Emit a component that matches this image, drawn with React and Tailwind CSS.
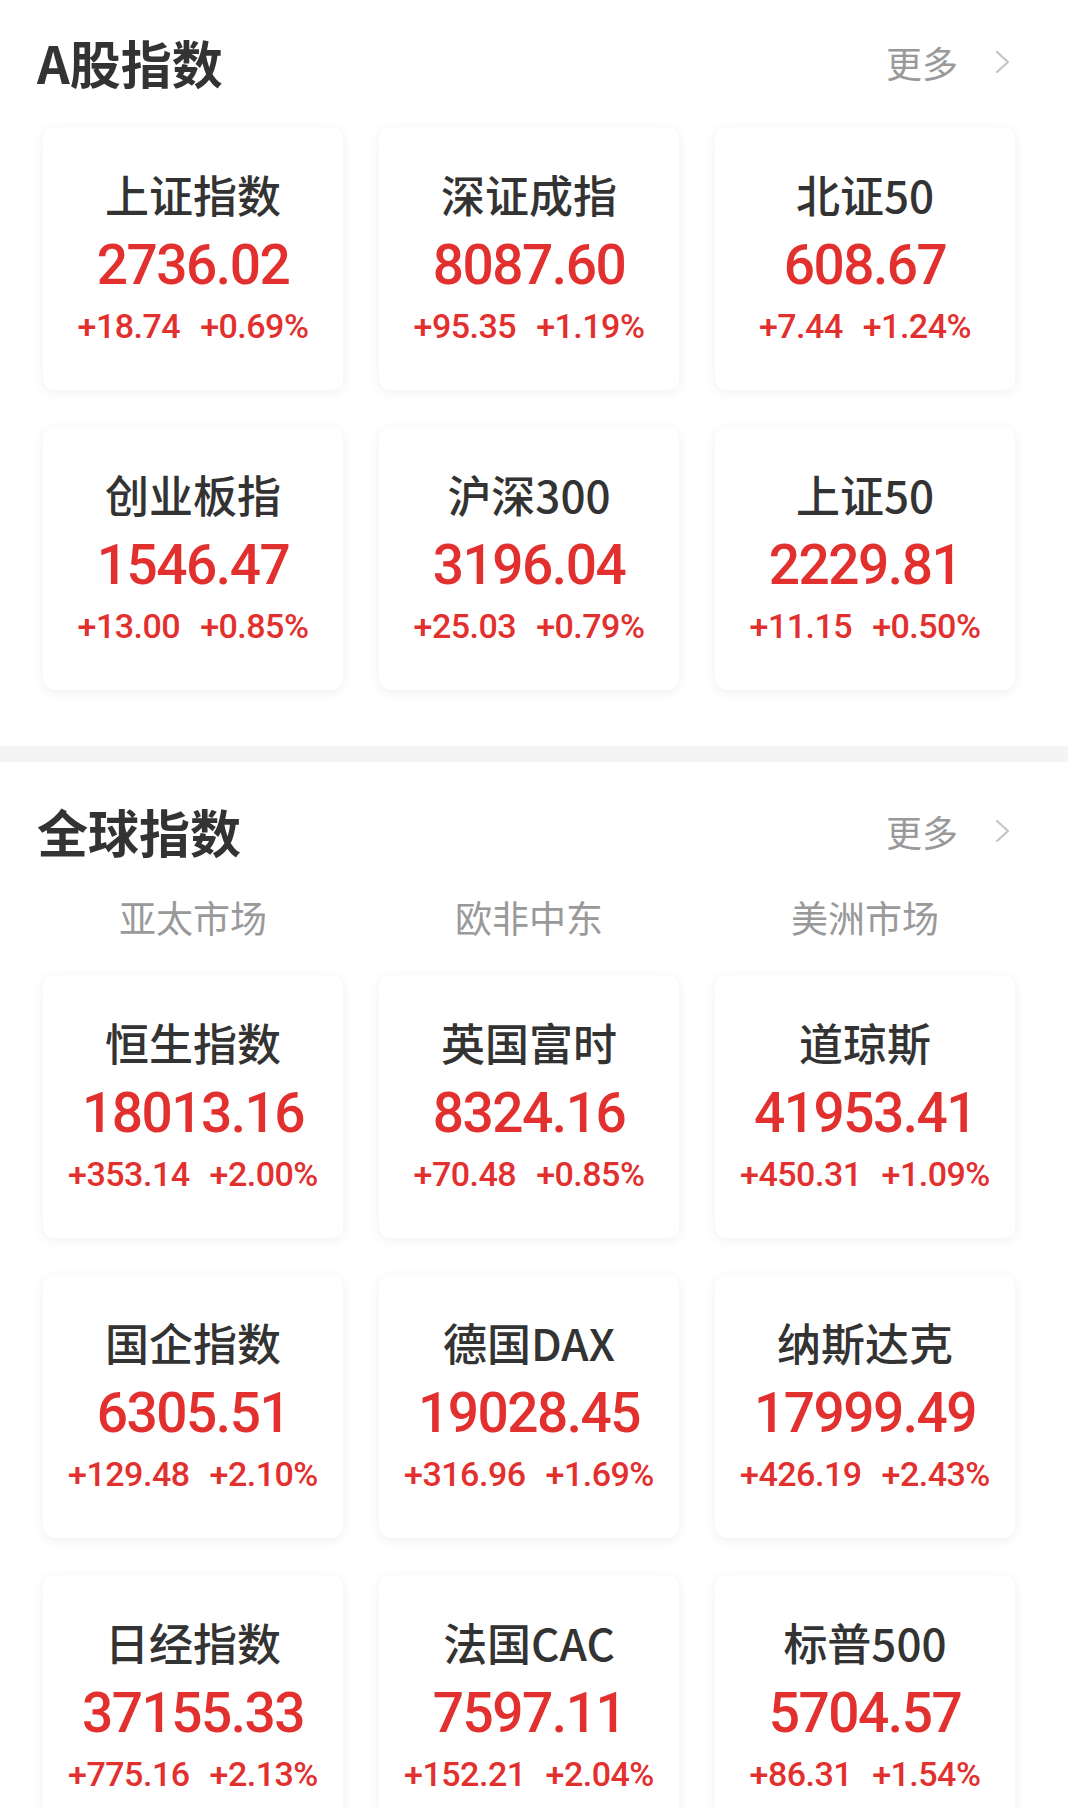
import React from 'react';

const cjk = { fontFamily: '"Noto Sans CJK SC", "Noto Sans", sans-serif' };
const num = { fontFamily: 'Roboto, "Noto Sans", sans-serif' };

const aShares = [
	{ name: '上证指数', price: '2736.02', change: '+18.74', pct: '+0.69%' },
	{ name: '深证成指', price: '8087.60', change: '+95.35', pct: '+1.19%' },
	{ name: '北证50', price: '608.67', change: '+7.44', pct: '+1.24%' },
	{ name: '创业板指', price: '1546.47', change: '+13.00', pct: '+0.85%' },
	{ name: '沪深300', price: '3196.04', change: '+25.03', pct: '+0.79%' },
	{ name: '上证50', price: '2229.81', change: '+11.15', pct: '+0.50%' },
];

const globalIdx = [
	{ name: '恒生指数', price: '18013.16', change: '+353.14', pct: '+2.00%' },
	{ name: '英国富时', price: '8324.16', change: '+70.48', pct: '+0.85%' },
	{ name: '道琼斯', price: '41953.41', change: '+450.31', pct: '+1.09%' },
	{ name: '国企指数', price: '6305.51', change: '+129.48', pct: '+2.10%' },
	{ name: '德国DAX', price: '19028.45', change: '+316.96', pct: '+1.69%' },
	{ name: '纳斯达克', price: '17999.49', change: '+426.19', pct: '+2.43%' },
	{ name: '日经指数', price: '37155.33', change: '+775.16', pct: '+2.13%' },
	{ name: '法国CAC', price: '7597.11', change: '+152.21', pct: '+2.04%' },
	{ name: '标普500', price: '5704.57', change: '+86.31', pct: '+1.54%' },
];

function Header({ title }) {
	return (
		<div className="flex items-center justify-between h-[50px] pl-[37px] pr-[58px]">
			<h2 className="text-[51px] font-bold leading-[50px] text-[#333]" style={cjk}>
				{title}
			</h2>
			<div className="flex items-center gap-[37px]">
				<span className="text-[36px] leading-[40px] text-[#999]" style={cjk}>
					更多
				</span>
				<svg width="15" height="24" viewBox="0 0 15 24" fill="none">
					<path d="M2 2 L13 12 L2 22" stroke="#c4c4c4" strokeWidth="2.2" strokeLinecap="round" strokeLinejoin="round" />
				</svg>
			</div>
		</div>
	);
}

function IndexCard({ name, price, change, pct }) {
	return (
		<div className="h-[263px] rounded-[12px] bg-white shadow-[0_2px_12px_rgba(0,0,0,0.07)] flex flex-col items-center pt-[42px]">
			<div className="h-[50px] leading-[50px] text-[44px] font-medium text-[#333]" style={cjk}>
				{name}
			</div>
			<div className="h-[92px] leading-[92px] text-[55px] font-medium tracking-[-1.5px] text-[#e2302f]" style={num}>
				{price}
			</div>
			<div className="h-[30px] leading-[30px] text-[34px] font-medium tracking-[-0.5px] text-[#e2302f] flex gap-[20px]" style={num}>
				<span>{change}</span>
				<span>{pct}</span>
			</div>
		</div>
	);
}

export default function App() {
	return (
		<div className="w-[1068px] h-[1807px] overflow-hidden bg-white">
			<section className="pt-[37px]">
				<Header title="A股指数" />
				<div className="grid grid-cols-[300px_300px_300px] gap-x-[36px] gap-y-[37px] pl-[43px] mt-[40px]">
					{aShares.map((it) => (
						<IndexCard key={it.name} {...it} />
					))}
				</div>
			</section>

			<div className="h-[16px] bg-[#f4f4f4] mt-[56px]" />

			<section className="pt-[44px]">
				<Header title="全球指数" />
				<div className="grid grid-cols-[300px_300px_300px] gap-x-[36px] pl-[43px] mt-[41px]">
					{['亚太市场', '欧非中东', '美洲市场'].map((t) => (
						<div key={t} className="text-center text-[37px] leading-[40px] text-[#999]" style={cjk}>
							{t}
						</div>
					))}
				</div>
				<div className="grid grid-cols-[300px_300px_300px] gap-x-[36px] gap-y-[37px] pl-[43px] mt-[38px]">
					{globalIdx.map((it) => (
						<IndexCard key={it.name} {...it} />
					))}
				</div>
			</section>
		</div>
	);
}
